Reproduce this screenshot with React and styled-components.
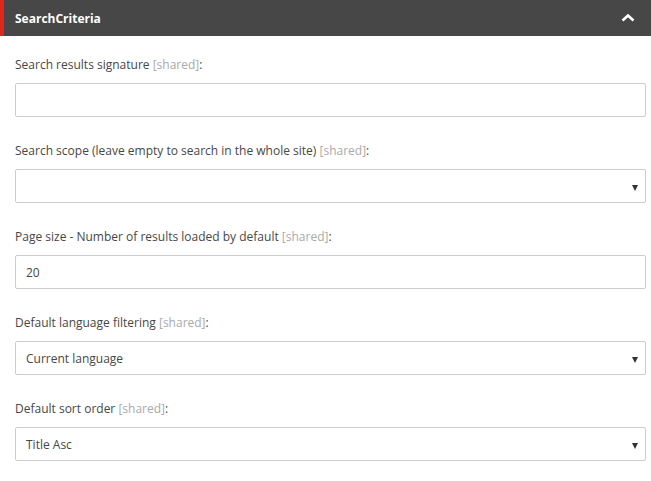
import React from "react";
import styled, { createGlobalStyle } from "styled-components";

const Global = createGlobalStyle`
  html, body { margin: 0; padding: 0; background: #fff; }
  body { font-family: "Open Sans", "Noto Sans", sans-serif; }
`;

const Panel = styled.section`
  width: 651px;
`;

const Header = styled.header`
  position: relative;
  height: 36px;
  background: #474747;
  display: flex;
  align-items: center;
  justify-content: space-between;
  padding: 0 15px;
  box-sizing: border-box;
  &::before {
    content: "";
    position: absolute;
    left: 0;
    top: 0;
    bottom: 0;
    width: 4px;
    background: #e0261c;
  }
`;

const Title = styled.h2`
  margin: 0;
  font-size: 12px;
  font-weight: 700;
  color: #fff;
`;

const Toggle = styled.svg`
  width: 14px;
  height: 8px;
  margin-right: 1px;
`;

const Body = styled.div`
  padding: 20px 5px 0 15px;
  display: flex;
  flex-direction: column;
  gap: 25px;
`;

const Field = styled.div`
  display: flex;
  flex-direction: column;
  gap: 9px;
`;

const Label = styled.label`
  font-size: 12px;
  line-height: 18px;
  color: #474747;
`;

const Shared = styled.span`
  color: #aaa;
`;

const Box = styled.div`
  position: relative;
  height: 34px;
  box-sizing: border-box;
  border: 1px solid #ccc;
  border-radius: 2px;
  background: #fff;
  display: flex;
  align-items: center;
  padding: 0 10px;
  font-size: 12px;
  color: #474747;
`;

const Arrow = styled.span`
  position: absolute;
  right: 7px;
  top: 15px;
  width: 0;
  height: 0;
  border-left: 3.5px solid transparent;
  border-right: 3.5px solid transparent;
  border-top: 6px solid #333;
`;

const fields = [
  { label: "Search results signature", type: "input", value: "" },
  { label: "Search scope (leave empty to search in the whole site)", type: "select", value: "" },
  { label: "Page size - Number of results loaded by default", type: "input", value: "20" },
  { label: "Default language filtering", type: "select", value: "Current language" },
  { label: "Default sort order", type: "select", value: "Title Asc" },
];

export default function App() {
  return (
    <Panel>
      <Global />
      <Header>
        <Title>SearchCriteria</Title>
        <Toggle viewBox="0 0 14 8">
          <path d="M1.5 6.5 L7 1.5 L12.5 6.5" fill="none" stroke="#fff" strokeWidth="2.6" />
        </Toggle>
      </Header>
      <Body>
        {fields.map((f) => (
          <Field key={f.label}>
            <Label>
              {f.label} <Shared>[shared]</Shared>:
            </Label>
            <Box>
              {f.value}
              {f.type === "select" && <Arrow />}
            </Box>
          </Field>
        ))}
      </Body>
    </Panel>
  );
}
